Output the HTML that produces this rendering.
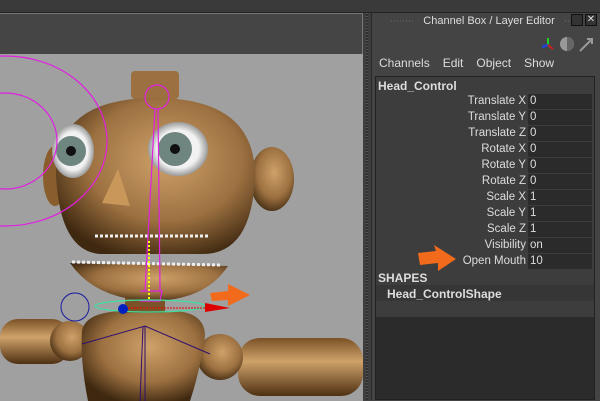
<!DOCTYPE html>
<html><head><style>
*{margin:0;padding:0;box-sizing:border-box}
body{width:600px;height:400px;overflow:hidden;background:#444;font-family:"Liberation Sans",sans-serif;position:relative}
.topbar{position:absolute;left:0;top:0;width:600px;height:13px;background:#3a3a3a;border-bottom:1px solid #222}
.vp{position:absolute;left:0;top:13px;width:363px;height:387px;background:#454545;border-right:1px solid #777;border-top:1px solid #777}
.vp svg{position:absolute;left:0;top:40px}
.strip{position:absolute;left:363px;top:13px;width:9px;height:387px;background:#3e3e3e;border-right:1px solid #2a2a2a}
.strip i{position:absolute;left:3px;top:0;width:2px;height:100%;background:repeating-linear-gradient(#555 0 1px,#2f2f2f 1px 3px)}
.panel{position:absolute;left:372px;top:13px;width:228px;height:387px;background:#444}
.title{position:absolute;top:2px;left:0;width:228px;font-size:11px;color:#ddd;text-align:center}
.btn{position:absolute;top:1px;width:12px;height:12px;border:1px solid #111;background:#333}
.menu{position:absolute;top:43px;left:7px;font-size:12px;color:#ddd;word-spacing:0}
.menu span{margin-right:13px}
.box{position:absolute;left:3px;top:63px;width:220px;height:324px;background:#2b2b2b;border:1px solid #222}
.hdr{position:absolute;left:0;top:0;width:218px;height:240px;background:#3d3d3d}
.row{position:absolute;left:0;width:218px;height:16px;font-size:11.5px;color:#ddd}
.row .l{position:absolute;right:68px;top:1px}
.row .v{position:absolute;left:152px;width:64px;height:15px;background:#2b2b2b;top:0;padding-left:2px;line-height:15px}
.b{font-weight:bold;font-size:12px;color:#ddd;position:absolute}
</style></head><body>
<div class="topbar"></div>
<div class="vp">
<svg width="363" height="347" viewBox="0 53 363 347">
<defs>
<radialGradient id="w" cx="0.55" cy="0.4" r="0.65"><stop offset="0" stop-color="#cfa26a"/><stop offset="0.6" stop-color="#9c7040"/><stop offset="1" stop-color="#3e2810"/></radialGradient>
<linearGradient id="arm" x1="0" y1="0" x2="0" y2="1"><stop offset="0" stop-color="#7a5226"/><stop offset="0.4" stop-color="#cfa26a"/><stop offset="1" stop-color="#4e3012"/></linearGradient>
<radialGradient id="eye" cx="0.5" cy="0.5" r="0.5"><stop offset="0.7" stop-color="#f2f2f2"/><stop offset="1" stop-color="#9a9a9a"/></radialGradient>
</defs>
<rect x="0" y="53" width="363" height="347" fill="#a0a0a0"/>
<rect x="0" y="318" width="70" height="45" rx="18" fill="url(#arm)"/>
<circle cx="70" cy="340" r="20" fill="url(#w)"/>
<rect x="238" y="337" width="125" height="58" rx="22" fill="url(#arm)"/>
<circle cx="220" cy="356" r="23" fill="url(#w)"/>
<path d="M82 330 Q85 312 120 310 L175 310 Q205 312 205 335 Q200 370 190 400 L88 400 Q80 360 82 330Z" fill="url(#w)"/>
<rect x="125" y="296" width="40" height="16" fill="#7a5428"/>
<path d="M70 262 L228 265 Q205 300 150 300 Q95 298 70 262Z" fill="url(#w)"/>
<path d="M72 261 L220 264" stroke="#eee" stroke-width="3" stroke-dasharray="3 2"/>
<rect x="131" y="70" width="48" height="28" rx="4" fill="#9c7040"/>
<ellipse cx="272" cy="178" rx="22" ry="32" fill="url(#w)"/>
<ellipse cx="55" cy="175" rx="12" ry="30" fill="#8a5e2c"/>
<path d="M56 175 Q55 97 155 97 Q255 97 255 175 Q252 255 200 253 L100 253 Q60 250 56 175Z" fill="url(#w)"/>
<path d="M95 235 L210 235" stroke="#eee" stroke-width="3" stroke-dasharray="3 2"/>
<ellipse cx="73" cy="150" rx="21" ry="27" fill="url(#eye)"/>
<circle cx="71" cy="150" r="15" fill="#6f8580"/><circle cx="71" cy="150" r="5" fill="#111"/>
<ellipse cx="178" cy="148" rx="30" ry="27" fill="url(#eye)"/>
<circle cx="175" cy="148" r="17" fill="#6f8580"/><circle cx="175" cy="148" r="5" fill="#111"/>
<path d="M118 168 L102 202 L130 205Z" fill="#c9975a"/>
<g fill="none" stroke="#e020e0" stroke-width="1.2">
<ellipse cx="5" cy="140" rx="102" ry="85"/>
<ellipse cx="5" cy="140" rx="52" ry="48"/>
<circle cx="157" cy="96" r="12"/>
<path d="M155 108 L145 290 M158 108 L160 290 M140 290 L162 290 L160 300 L140 300"/>
</g>
<path d="M149 240 V300" stroke="#ff0" stroke-width="2" stroke-dasharray="2 2"/>
<circle cx="75" cy="306" r="14" fill="none" stroke="#1a1aa0" stroke-width="1"/>
<ellipse cx="150" cy="305" rx="55" ry="6" fill="none" stroke="#40e0a0" stroke-width="1.2"/>
<path d="M125 307 L205 307" stroke="#e00" stroke-dasharray="2 1"/>
<path d="M205 302 L230 307 L205 311Z" fill="#d00"/>
<circle cx="123" cy="308" r="5" fill="#0020c0"/>
<g stroke="#301070" stroke-width="1" fill="none"><path d="M82 343 L145 325 L210 353 M145 325 L145 400 M143 325 L140 400"/></g>
<path d="M210 292 L228 290 L228 283 L250 294 L228 305 L228 299 L212 300Z" fill="#f26a1b"/>
</svg>
</div>
<div class="strip"><i></i></div>
<div class="panel">
<div class="title"><span style="color:#666">∙∙∙∙∙∙∙∙</span>&nbsp;&nbsp; Channel Box / Layer Editor &nbsp;&nbsp;<span style="color:#666">∙∙∙∙∙∙</span></div>
<div class="btn" style="left:199px"></div><div class="btn" style="left:213px;color:#ddd;font-size:10px;line-height:10px;text-align:center">✕</div>
<svg style="position:absolute;left:168px;top:22px" width="56" height="18"><path d="M8 10 L8 3" stroke="#2c2" stroke-width="2"/><path d="M8 10 L2 12" stroke="#24c" stroke-width="3"/><path d="M8 10 L13 14" stroke="#c22" stroke-width="2"/><circle cx="27" cy="9" r="7" fill="#999"/><path d="M27 2 A7 7 0 0 1 27 16Z" fill="#666"/><path d="M40 16 L52 4 M47 4 L52 4 L52 9" stroke="#999" stroke-width="2" fill="none"/></svg>
<div class="menu"><span>Channels</span><span>Edit</span><span>Object</span><span>Show</span></div>
<div class="box">
<div class="hdr"></div>
<div class="b" style="left:2px;top:2px">Head_Control</div>
<div class="row" style="top:17px"><span class="l">Translate X</span><span class="v">0</span></div>
<div class="row" style="top:33px"><span class="l">Translate Y</span><span class="v">0</span></div>
<div class="row" style="top:49px"><span class="l">Translate Z</span><span class="v">0</span></div>
<div class="row" style="top:65px"><span class="l">Rotate X</span><span class="v">0</span></div>
<div class="row" style="top:81px"><span class="l">Rotate Y</span><span class="v">0</span></div>
<div class="row" style="top:97px"><span class="l">Rotate Z</span><span class="v">0</span></div>
<div class="row" style="top:113px"><span class="l">Scale X</span><span class="v">1</span></div>
<div class="row" style="top:129px"><span class="l">Scale Y</span><span class="v">1</span></div>
<div class="row" style="top:145px"><span class="l">Scale Z</span><span class="v">1</span></div>
<div class="row" style="top:161px"><span class="l">Visibility</span><span class="v">on</span></div>
<div class="row" style="top:177px"><span class="l">Open Mouth</span><span class="v">10</span></div>
<div class="b" style="left:2px;top:194px">SHAPES</div>
<div style="position:absolute;left:0;top:208px;width:218px;height:16px;background:#363636"></div>
<div class="b" style="left:11px;top:210px">Head_ControlShape</div>
</div>
<svg style="position:absolute;left:44px;top:230px" width="42" height="30"><path d="M2 10 L20 8 L18 2 L40 16 L22 28 L22 20 L4 22Z" fill="#f26a1b"/></svg>
</div>
</body></html>
